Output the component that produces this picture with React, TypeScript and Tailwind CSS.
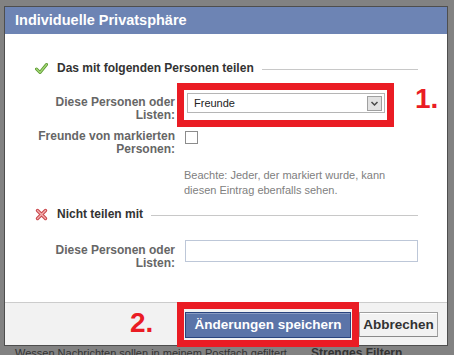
import React from 'react';

const CheckIcon = () => (
  <svg width="13" height="13" viewBox="0 0 13 13" className="shrink-0">
    <path d="M1.5 7 L5 10.5 L11.5 2.5" fill="none" stroke="#5c9a34" strokeWidth="3" strokeLinecap="round" strokeLinejoin="round" />
    <path d="M1.5 7 L5 10.5 L11.5 2.5" fill="none" stroke="#a6d877" strokeWidth="1.2" strokeLinecap="round" strokeLinejoin="round" />
  </svg>
);

const CrossIcon = () => (
  <svg width="13" height="13" viewBox="0 0 13 13" className="shrink-0">
    <path d="M2.5 2.5 L10.5 10.5 M10.5 2.5 L2.5 10.5" fill="none" stroke="#c9464b" strokeWidth="3.4" strokeLinecap="round" />
    <path d="M2.5 2.5 L10.5 10.5 M10.5 2.5 L2.5 10.5" fill="none" stroke="#f3b0b0" strokeWidth="1.3" strokeLinecap="round" />
  </svg>
);

const SectionHeading = ({ icon, title }: { icon: React.ReactNode; title: string }) => (
  <div className="flex items-center h-[16px]">
    {icon}
    <span className="ml-[9px] text-[12px] leading-[16px] font-bold text-[#333]">{title}</span>
    <div className="flex-1 ml-[8px] mt-[3px] h-px bg-[#c8c8c8]" />
  </div>
);

const App = () => {
  return (
    <div className="relative w-[454px] h-[355px] overflow-hidden bg-[#828282] font-['Liberation_Sans',Arial,sans-serif]">
      {/* dialog */}
      <div className="ml-[4px] mt-[6px] w-[444px] border border-[#4e4e4e]">
        <div className="h-[27px] bg-[#6d84b4] pl-[10px] flex items-center">
          <span className="text-white font-bold text-[14.5px] leading-none">Individuelle Privatsphäre</span>
        </div>

        <div className="h-[268px] bg-white pl-[30px] pr-[29px] pt-[26px]">
          <SectionHeading icon={<CheckIcon />} title="Das mit folgenden Personen teilen" />

          <div className="grid grid-cols-[140px_1fr] gap-x-[10px] mt-[17px]">
            <div className="pt-[3px] text-right text-[12px] leading-[13px] font-bold text-[#666]">
              Diese Personen oder
              <br />
              Listen:
            </div>
            <div>
              <div className="ml-[2px] w-[198px] h-[20px] border border-[#b5b5b5] bg-white flex items-center justify-between pl-[6px] pr-[2px]">
                <span className="text-[11px] text-[#222]">Freunde</span>
                <div className="w-[15px] h-[15px] border border-[#a0a0a0] bg-[#e2e2e2] flex items-center justify-center">
                  <svg width="9" height="7" viewBox="0 0 9 7">
                    <path d="M1.5 2 L4.5 5 L7.5 2" fill="none" stroke="#4a4a4a" strokeWidth="1.5" />
                  </svg>
                </div>
              </div>
            </div>

            <div className="mt-[8px] text-right text-[12px] leading-[13px] font-bold text-[#666]">
              Freunde von markierten
              <br />
              Personen:
            </div>
            <div className="mt-[9px]">
              <div className="w-[13px] h-[13px] border border-[#8c8c8c] bg-white" />
            </div>

            <div />
            <div className="mt-[12px] -ml-[1px] text-[11px] leading-[15px] text-[#808080]">
              Beachte: Jeder, der markiert wurde, kann
              <br />
              diesen Eintrag ebenfalls sehen.
            </div>
          </div>

          <div className="mt-[8px]">
            <SectionHeading icon={<CrossIcon />} title="Nicht teilen mit" />
          </div>

          <div className="grid grid-cols-[140px_1fr] gap-x-[10px] mt-[18px]">
            <div className="pt-[4px] text-right text-[12px] leading-[13px] font-bold text-[#666]">
              Diese Personen oder
              <br />
              Listen:
            </div>
            <div className="h-[22px] border border-[#bdc7d8] bg-white" />
          </div>
        </div>

        <div className="h-[43px] bg-[#f2f2f2] border-t border-[#cccccc] flex justify-end items-start pt-[9px] pr-[9px] gap-[8px]">
          <button className="w-[166px] h-[26px] bg-[#5b74a8] border border-[#29447e] shadow-[inset_0_1px_0_#8a9cc2] text-white font-bold text-[13.5px] leading-none">
            Änderungen speichern
          </button>
          <button className="w-[79px] h-[25px] bg-[#f2f2f2] border border-[#a0a0a0] border-b-[#8a8a8a] shadow-[inset_0_1px_0_#ffffff] text-[#333] font-bold text-[13.5px] leading-none">
            Abbrechen
          </button>
        </div>
      </div>

      {/* page behind the overlay */}
      <div className="flex pl-[15px] text-[11px] leading-[14px] text-[#333]">
        <span className="w-[296px]">Wessen Nachrichten sollen in meinem Postfach gefiltert</span>
        <span className="font-bold text-[12px]">Strenges Filtern</span>
      </div>

      {/* annotations */}
      <div className="absolute left-[177px] top-[83px] w-[217px] h-[44px] border-[7px] border-[#ea1c24]" />
      <div className="absolute left-[415px] top-[85px] text-[28px] leading-[28px] font-bold text-[#ea1c24]">1.</div>
      <div className="absolute left-[177px] top-[302px] w-[182px] h-[45px] border-[7px] border-[#ea1c24]" />
      <div className="absolute left-[130px] top-[309px] text-[28px] leading-[28px] font-bold text-[#ea1c24]">2.</div>
    </div>
  );
};

export default App;
